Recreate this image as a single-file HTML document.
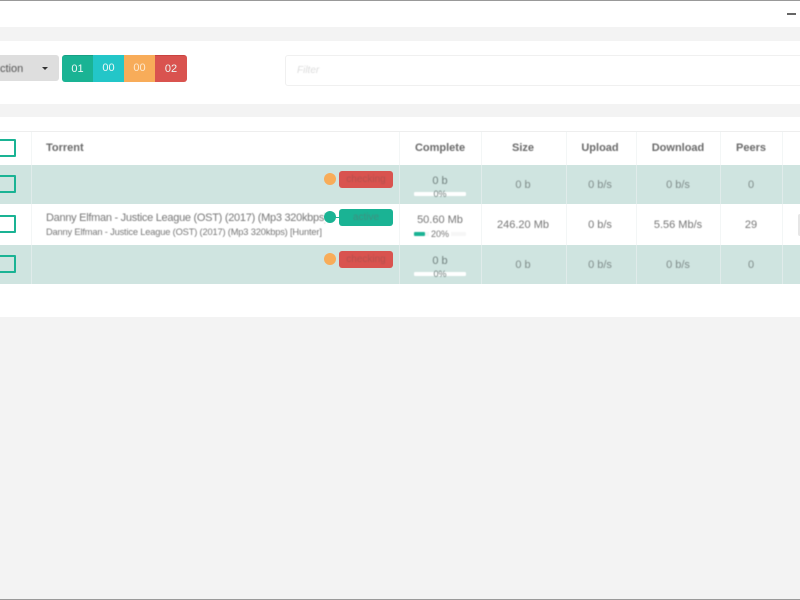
<!DOCTYPE html>
<html>
<head>
<meta charset="utf-8">
<style>
html,body{margin:0;padding:0;width:800px;height:600px;overflow:hidden;background:#f3f3f3;font-family:"Liberation Sans",sans-serif;color:#777}
.a{position:absolute}
.t{position:absolute;white-space:nowrap;filter:blur(.4px)}
.c{text-align:center;transform:translateX(-50%)}
.cb{position:absolute;left:-2px;width:14px;height:14px;border:2px solid #1ab394;border-radius:1px;background:#fff;filter:blur(.3px)}
.v{position:absolute;width:1px;top:131px;height:153px;background:rgba(235,240,240,.6)}
.row{position:absolute;left:0;width:800px;background:#cfe4e0;filter:blur(.3px)}
.badge{position:absolute;left:339px;width:54px;height:17px;border-radius:3px;filter:blur(.3px)}
.dot{position:absolute;width:12px;height:12px;border-radius:50%;filter:blur(.2px)}
.bar{position:absolute;height:4px;background:#fff;border-radius:1px;left:414px;width:52px;filter:blur(.4px)}
.h{font-size:11px;font-weight:bold;color:#6a6a6a;top:142px}
.d{font-size:11px;color:#777}
.seg{position:absolute;top:55px;height:27px;color:#eef8f6;font-size:11px;line-height:26px;text-align:center;filter:blur(.25px)}
</style>
</head>
<body>
<div class="a" style="left:0;top:0;width:800px;height:1px;background:#999"></div>
<div class="a" style="left:0;top:1px;width:800px;height:26px;background:#fff"></div>
<div class="a" style="left:787px;top:13px;width:9px;height:1.5px;background:#666;filter:blur(.3px)"></div>
<div class="a" style="left:0;top:41px;width:800px;height:63px;background:#fff"></div>

<div class="a" style="left:0;top:55px;width:59px;height:26px;background:#dedede;border-radius:0 3px 3px 0;filter:blur(.3px)"></div>
<div class="t" style="left:0;top:63px;font-size:11px;color:#555">ction</div>
<div class="a" style="left:42px;top:67px;width:0;height:0;border-left:3px solid transparent;border-right:3px solid transparent;border-top:3px solid #333"></div>

<div class="seg" style="left:62px;width:31px;background:#1ab394;border-radius:3px 0 0 3px;border-top:1px solid #16a085;height:26px">01</div>
<div class="seg" style="left:93px;width:31px;background:#23c6c8;line-height:27px">00</div>
<div class="seg" style="left:124px;width:31px;background:#f8ac59;color:#fde9cf;line-height:27px">00</div>
<div class="seg" style="left:155px;width:32px;background:#d9534f;border-radius:0 3px 3px 0;border-top:1px solid #c9433f;height:26px">02</div>

<div class="a" style="left:285px;top:55px;width:530px;height:29px;border:1px solid #f0f0f0;border-radius:3px;background:#fff"></div>
<div class="t" style="left:297px;top:65px;font-size:10px;font-style:italic;color:#dcdcdc">Filter</div>

<div class="a" style="left:0;top:117px;width:800px;height:200px;background:#fff"></div>
<div class="a" style="left:0;top:131px;width:800px;height:1px;background:#eeeeee"></div>

<div class="row" style="top:165px;height:39px"></div>
<div class="row" style="top:245px;height:39px"></div>

<div class="v" style="left:31px"></div>
<div class="v" style="left:399px"></div>
<div class="v" style="left:481px"></div>
<div class="v" style="left:566px"></div>
<div class="v" style="left:636px"></div>
<div class="v" style="left:720px"></div>
<div class="v" style="left:782px"></div>

<div class="cb" style="top:139px"></div>
<div class="cb" style="top:175px;background:#cfe4e0"></div>
<div class="cb" style="top:215px"></div>
<div class="cb" style="top:255px;background:#cfe4e0"></div>

<div class="t h" style="left:46px">Torrent</div>
<div class="t h c" style="left:440px">Complete</div>
<div class="t h c" style="left:523px">Size</div>
<div class="t h c" style="left:600px">Upload</div>
<div class="t h c" style="left:678px">Download</div>
<div class="t h c" style="left:751px">Peers</div>

<div class="dot" style="left:324px;top:173px;background:#f8ac59"></div>
<div class="badge" style="top:171px;background:#d9534f"></div>
<div class="t c" style="left:366px;top:174px;font-size:10px;color:#b5504d">checking</div>
<div class="dot" style="left:324px;top:253px;background:#f8ac59"></div>
<div class="badge" style="top:251px;background:#d9534f"></div>
<div class="t c" style="left:366px;top:254px;font-size:10px;color:#b5504d">checking</div>
<div class="t" style="left:46px;top:212px;font-size:11px;letter-spacing:-.28px;color:#777;width:279px;overflow:hidden">Danny Elfman - Justice League (OST) (2017) (Mp3 320kbps)</div>
<div class="t" style="left:46px;top:227px;font-size:9.3px;letter-spacing:-.17px;color:#777">Danny Elfman - Justice League (OST) (2017) (Mp3 320kbps) [Hunter]</div>
<div class="a" style="left:335px;top:217px;width:5px;height:1px;background:#1ab394"></div>
<div class="dot" style="left:324px;top:211px;background:#1ab394"></div>
<div class="badge" style="top:209px;background:#1ab394"></div>
<div class="t c" style="left:366px;top:212px;font-size:10px;color:#3f9080">active</div>

<div class="t d c" style="left:440px;top:175px;color:#71807e">0 b</div>
<div class="bar" style="top:192px"></div>
<div class="t c" style="left:440px;top:189px;font-size:9px;color:#71807e">0%</div>
<div class="t d c" style="left:440px;top:214px">50.60 Mb</div>
<div class="bar" style="top:232px;background:#f6f6f6"></div>
<div class="bar" style="top:232px;width:11px;background:#1ab394"></div>
<div class="t c" style="left:440px;top:229px;font-size:9px;background:#fff;padding:0 2px">20%</div>
<div class="t d c" style="left:440px;top:255px;color:#71807e">0 b</div>
<div class="bar" style="top:272px"></div>
<div class="t c" style="left:440px;top:269px;font-size:9px;color:#71807e">0%</div>

<div class="t d c" style="left:523px;top:179px;color:#7f8c8a">0 b</div>
<div class="t d c" style="left:600px;top:179px;color:#7f8c8a">0 b/s</div>
<div class="t d c" style="left:678px;top:179px;color:#7f8c8a">0 b/s</div>
<div class="t d c" style="left:751px;top:179px;color:#7f8c8a">0</div>

<div class="t d c" style="left:523px;top:219px">246.20 Mb</div>
<div class="t d c" style="left:600px;top:219px">0 b/s</div>
<div class="t d c" style="left:678px;top:219px">5.56 Mb/s</div>
<div class="t d c" style="left:751px;top:219px">29</div>
<div class="a" style="left:798px;top:214px;width:6px;height:22px;background:#e6e6e6;border-radius:2px"></div>

<div class="t d c" style="left:523px;top:259px;color:#7f8c8a">0 b</div>
<div class="t d c" style="left:600px;top:259px;color:#7f8c8a">0 b/s</div>
<div class="t d c" style="left:678px;top:259px;color:#7f8c8a">0 b/s</div>
<div class="t d c" style="left:751px;top:259px;color:#7f8c8a">0</div>

<div class="a" style="left:0;top:599px;width:800px;height:1px;background:#999"></div>
</body>
</html>
